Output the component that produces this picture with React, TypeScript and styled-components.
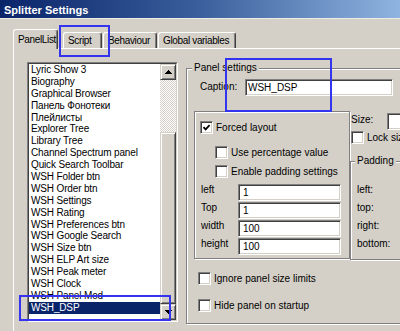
import React from "react";
import styled, { createGlobalStyle } from "styled-components";

const GlobalStyle = createGlobalStyle`
  html, body { margin: 0; padding: 0; background: #d4d0c8; }
  body {
    font-family: "Liberation Sans", Arial, sans-serif;
    font-size: 10px;
    color: #000;
  }
  * { box-sizing: border-box; }
`;

const FACE = "#d4d0c8";
const SHADOW = "#808080";
const DARK = "#404040";

const Window = styled.div`
  position: relative;
  width: 400px;
  height: 331px;
  overflow: hidden;
  background: ${FACE};
  display: flex;
  flex-direction: column;
`;

const TitleBar = styled.div`
  flex: none;
  height: 19px;
  padding: 4px 0 0 4px;
  background: linear-gradient(90deg, #0a246a 0%, #3a5f9c 50%, #8fb4e0 100%);
  border-bottom: 1px solid #ecebe6;
  color: #fff;
  font-weight: bold;
  font-size: 11px;
  line-height: 12px;
  white-space: nowrap;
`;

const TabArea = styled.div`
  flex: 1;
  display: flex;
  flex-direction: column;
  padding-left: 13px;
`;

const TabStrip = styled.div`
  flex: none;
  height: 29px;
  display: flex;
  align-items: flex-end;
`;

const Tab = styled.div<{ $active?: boolean; $width: number; $gap: number }>`
  position: relative;
  z-index: ${(p) => (p.$active ? 2 : 1)};
  flex: none;
  width: ${(p) => p.$width}px;
  height: ${(p) => (p.$active ? 20 : 16)}px;
  margin-left: ${(p) => p.$gap}px;
  margin-bottom: ${(p) => (p.$active ? -1 : 0)}px;
  padding: ${(p) => (p.$active ? "0" : "1px")} 0 0 4px;
  background: ${FACE};
  border: 1px solid #fff;
  border-bottom: none;
  border-right-color: ${DARK};
  border-radius: 3px 3px 0 0;
  box-shadow: inset -1px 0 0 ${SHADOW};
  display: flex;
  align-items: center;
  line-height: 12px;
  letter-spacing: -0.35px;
  white-space: nowrap;
  overflow: hidden;
`;

const TabPage = styled.div`
  flex: 1;
  border-top: 1px solid #fff;
  border-left: 1px solid #fff;
  padding: 13px 0 0 13px;
  display: flex;
  align-items: flex-start;
  gap: 8px;
`;

/* ---------- list box ---------- */

const ListBox = styled.div`
  flex: none;
  width: 151px;
  height: 260px;
  border: 1px solid;
  border-color: ${SHADOW} #fff #fff ${SHADOW};
  display: flex;
`;

const ListInner = styled.div`
  flex: 1;
  display: flex;
  border: 1px solid;
  border-color: ${DARK} ${FACE} ${FACE} ${DARK};
  background: #fff;
  overflow: hidden;
`;

const Items = styled.ul`
  flex: 1;
  margin: 0;
  padding: 0;
  list-style: none;
  overflow: hidden;
`;

const Item = styled.li<{ $selected?: boolean }>`
  height: 11.9px;
  line-height: 11.9px;
  padding-left: 2px;
  white-space: nowrap;
  letter-spacing: -0.15px;
  background: ${(p) => (p.$selected ? "#0a246a" : "transparent")};
  color: ${(p) => (p.$selected ? "#fff" : "#000")};
`;

const ScrollBar = styled.div`
  flex: none;
  width: 16px;
  display: flex;
  flex-direction: column;
`;

const raised = `
  background: ${FACE};
  border: 1px solid;
  border-color: ${FACE} ${DARK} ${DARK} ${FACE};
  box-shadow: inset 1px 1px 0 #fff, inset -1px -1px 0 ${SHADOW};
`;

const ScrollButton = styled.div`
  ${raised}
  flex: none;
  height: 16px;
  display: flex;
  align-items: center;
  justify-content: center;
`;

const Track = styled.div`
  flex: 1;
  display: flex;
  flex-direction: column;
`;

const TrackGap = styled.div`
  flex: none;
  height: 52px;
  background: repeating-conic-gradient(#ffffff 0 25%, ${FACE} 0 50%) 0 0 / 2px 2px;
`;

const Thumb = styled.div`
  ${raised}
  flex: 1;
`;

/* ---------- group boxes ---------- */

const etched = `
  border: 1px solid ${SHADOW};
  box-shadow: inset 1px 1px 0 #fff, 1px 1px 0 #fff;
`;

const GroupBox = styled.div<{ $width: number; $height: number; $top: number }>`
  ${etched}
  flex: none;
  width: ${(p) => p.$width}px;
  height: ${(p) => p.$height}px;
  margin-top: ${(p) => p.$top}px;
  display: flex;
  flex-direction: column;
  align-items: flex-start;
`;

const Legend = styled.div<{ $indent: number }>`
  margin: -7px 0 0 ${(p) => p.$indent}px;
  padding: 0 2px;
  background: ${FACE};
  line-height: 12px;
  white-space: nowrap;
`;

const Frame = styled.div`
  ${etched}
  flex: none;
  width: 156px;
  height: 148px;
  padding: 9px 0 0 5px;
  display: flex;
  flex-direction: column;
  align-items: flex-start;
`;

const Row = styled.div<{ $top: number; $left: number }>`
  flex: none;
  display: flex;
  align-items: flex-start;
  margin-top: ${(p) => p.$top}px;
  margin-left: ${(p) => p.$left}px;
`;

const Column = styled.div`
  flex: none;
  display: flex;
  flex-direction: column;
  align-items: flex-start;
`;

const Label = styled.div<{ $width?: number; $pad?: number }>`
  flex: none;
  width: ${(p) => (p.$width ? `${p.$width}px` : "auto")};
  padding-top: ${(p) => p.$pad ?? 0}px;
  line-height: 12px;
  white-space: nowrap;
`;

const Field = styled.div<{ $width: number; $pad: number }>`
  flex: none;
  width: ${(p) => p.$width}px;
  height: 17px;
  padding-left: ${(p) => p.$pad}px;
  background: #fff;
  border: 1px solid;
  border-color: ${SHADOW} #fff #fff ${SHADOW};
  box-shadow: inset 1px 1px 0 ${DARK}, inset -1px -1px 0 ${FACE};
  line-height: 15px;
  white-space: nowrap;
  overflow: hidden;
`;

const FieldGrid = styled.div`
  flex: none;
  display: grid;
  grid-template-columns: 37px 103px;
  grid-auto-rows: 17px;
  row-gap: 1px;
  margin: 6px 0 0 1px;
  line-height: 12px;
`;

const LabelStack = styled.div`
  display: grid;
  grid-auto-rows: 17px;
  row-gap: 1px;
  margin: 17px 0 0 6px;
  line-height: 12px;
`;

/* ---------- checkbox ---------- */

const CheckRow = styled.div<{ $top: number; $left: number }>`
  flex: none;
  display: flex;
  align-items: center;
  gap: 3px;
  height: 13px;
  margin-top: ${(p) => p.$top}px;
  margin-left: ${(p) => p.$left}px;
  line-height: 12px;
  white-space: nowrap;
`;

const Box = styled.span`
  flex: none;
  width: 13px;
  height: 13px;
  background: #fff;
  border: 1px solid;
  border-color: ${SHADOW} #fff #fff ${SHADOW};
  box-shadow: inset 1px 1px 0 ${DARK}, inset -1px -1px 0 ${FACE};
  display: flex;
  align-items: center;
  justify-content: center;
`;

const Check = ({ label, checked, top, left }: { label: string; checked?: boolean; top: number; left: number }) => (
  <CheckRow $top={top} $left={left}>
    <Box>
      {checked && (
        <svg width="9" height="9" viewBox="0 0 9 9">
          <polyline points="1.5,4.2 3.6,6.4 7.6,2.2" fill="none" stroke="#000" strokeWidth="1.8" />
        </svg>
      )}
    </Box>
    <span>{label}</span>
  </CheckRow>
);

/* ---------- annotations ---------- */

const Mark = styled.div<{ $x: number; $y: number; $w: number; $h: number }>`
  position: absolute;
  left: ${(p) => p.$x}px;
  top: ${(p) => p.$y}px;
  width: ${(p) => p.$w}px;
  height: ${(p) => p.$h}px;
  border: 2px solid #3434f0;
  pointer-events: none;
  z-index: 10;
`;

const Arrow = ({ down }: { down?: boolean }) => (
  <svg width="7" height="4" viewBox="0 0 7 4" shapeRendering="crispEdges">
    <polygon points={down ? "0,0 7,0 3.5,4" : "3.5,0 7,4 0,4"} fill="#000" />
  </svg>
);

const TABS = [
  { label: "PanelList", width: 45, gap: 0, active: true },
  { label: "Script", width: 39, gap: 5 },
  { label: "Behaviour", width: 54, gap: 1 },
  { label: "Global variables", width: 78, gap: 1 },
];

const ITEMS = [
  "Lyric Show 3",
  "Biography",
  "Graphical Browser",
  "Панель Фонотеки",
  "Плейлисты",
  "Explorer Tree",
  "Library Tree",
  "Channel Spectrum panel",
  "Quick Search Toolbar",
  "WSH Folder btn",
  "WSH Order btn",
  "WSH Settings",
  "WSH Rating",
  "WSH Preferences btn",
  "WSH Google Search",
  "WSH Size btn",
  "WSH ELP Art size",
  "WSH Peak meter",
  "WSH Clock",
  "WSH Panel Mod",
  "WSH_DSP",
];

const FIELDS = [
  ["left", "1"],
  ["Top", "1"],
  ["width", "100"],
  ["height", "100"],
];

export default function App() {
  return (
    <>
      <GlobalStyle />
      <Window>
        <TitleBar>Splitter Settings</TitleBar>
        <TabArea>
          <TabStrip>
            {TABS.map((t) => (
              <Tab key={t.label} $active={t.active} $width={t.width} $gap={t.gap}>
                {t.label}
              </Tab>
            ))}
          </TabStrip>
          <TabPage>
            <ListBox>
              <ListInner>
                <Items>
                  {ITEMS.map((it) => (
                    <Item key={it} $selected={it === "WSH_DSP"}>
                      {it}
                    </Item>
                  ))}
                </Items>
                <ScrollBar>
                  <ScrollButton>
                    <Arrow />
                  </ScrollButton>
                  <Track>
                    <TrackGap />
                    <Thumb />
                  </Track>
                  <ScrollButton>
                    <Arrow down />
                  </ScrollButton>
                </ScrollBar>
              </ListInner>
            </ListBox>

            <GroupBox $width={232} $height={256} $top={6}>
              <Legend $indent={5}>Panel settings</Legend>
              <Row $top={5} $left={13}>
                <Label $width={45} $pad={2}>Caption:</Label>
                <Field $width={148} $pad={2}>WSH_DSP</Field>
              </Row>
              <Row $top={15} $left={7}>
                <Frame>
                  <Check label="Forced layout" checked top={0} left={0} />
                  <Check label="Use percentage value" top={12} left={15} />
                  <Check label="Enable padding settings" top={6} left={15} />
                  <FieldGrid>
                    {FIELDS.map(([l, v]) => (
                      <React.Fragment key={l}>
                        <Label>{l}</Label>
                        <Field $width={103} $pad={4}>{v}</Field>
                      </React.Fragment>
                    ))}
                  </FieldGrid>
                </Frame>
                <Column>
                  <Row $top={2} $left={1}>
                    <Label $width={36} $pad={1}>Size:</Label>
                    <Field $width={40} $pad={4} />
                  </Row>
                  <Check label="Lock size" top={1} left={1} />
                  <GroupBox $width={70} $height={99} $top={17}>
                    <Legend $indent={4}>Padding</Legend>
                    <LabelStack>
                      <Label>left:</Label>
                      <Label>top:</Label>
                      <Label>right:</Label>
                      <Label>bottom:</Label>
                    </LabelStack>
                  </GroupBox>
                </Column>
              </Row>
              <Check label="Ignore panel size limits" top={12} left={11} />
              <Check label="Hide panel on startup" top={14} left={11} />
            </GroupBox>
          </TabPage>
        </TabArea>

        <Mark $x={59} $y={25} $w={51} $h={32} />
        <Mark $x={225} $y={58} $w={107} $h={54} />
        <Mark $x={19} $y={295} $w={152} $h={26} />
      </Window>
    </>
  );
}
